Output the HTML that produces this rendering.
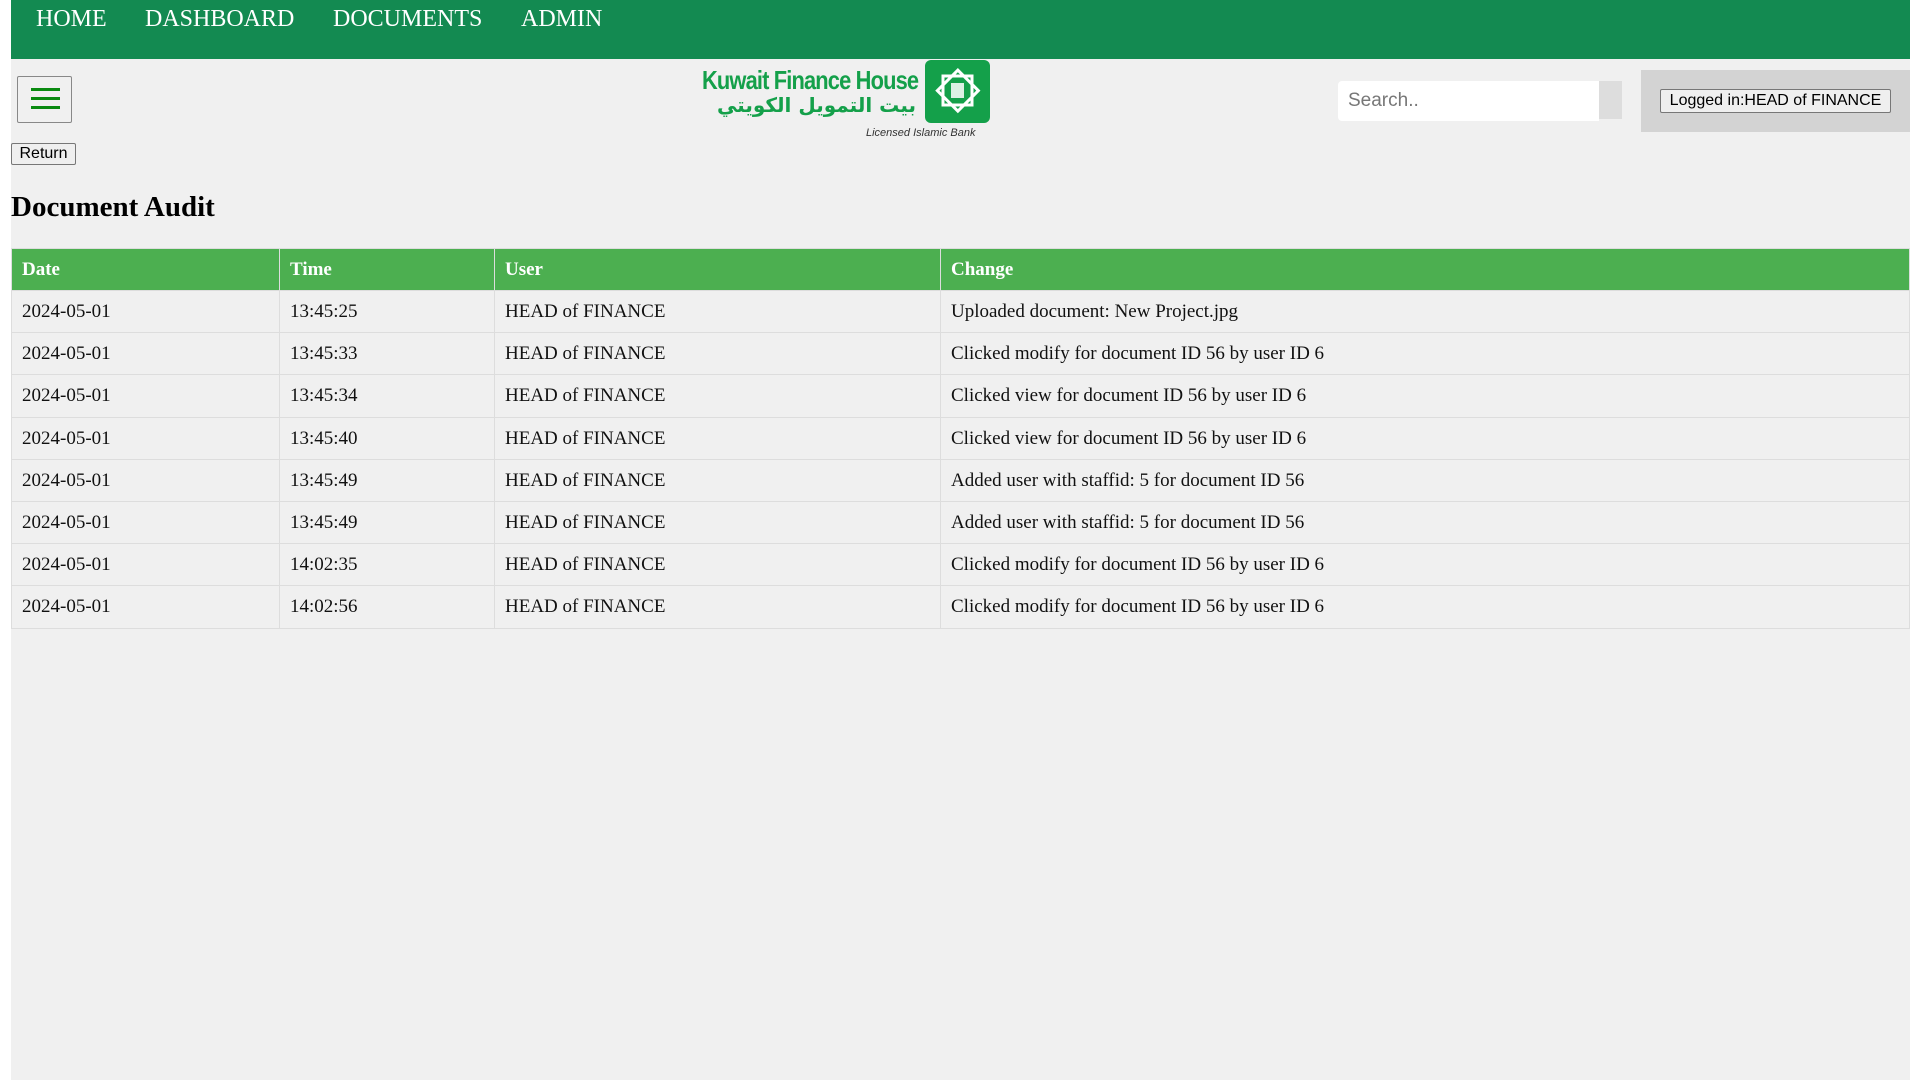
<!DOCTYPE html>
<html><head><meta charset="utf-8"><style>
html,body{margin:0;padding:0;background:#fff;width:1920px;height:1080px;overflow:hidden}
.page{position:absolute;left:11px;top:0;width:1899px;height:1080px;background:#f0f0f0;font-family:"Liberation Serif",serif}
.nav{position:absolute;left:0;top:0;width:1899px;height:59px;background:#138a51}
.nav span{position:absolute;top:6px;color:#fff;font-size:24px;}
.ham{position:absolute;left:6px;top:76px;width:55px;height:47px;border:1px solid #888;border-radius:2px;box-sizing:border-box}
.ham i{position:absolute;left:13px;width:29px;height:3px;background:#0a8a10}
.ret{position:absolute;left:0;top:143px;width:65px;height:22px;border:1px solid #777;border-radius:2px;background:#efefef;box-sizing:border-box;font:16px "Liberation Sans",sans-serif;text-align:center;line-height:20px}
h1{position:absolute;left:0;top:191px;margin:0;font-size:29px;font-weight:bold}
.search{position:absolute;left:1327px;top:81px;width:261px;height:40px;background:#fff;border-radius:4px 0 0 4px;font:19px "Liberation Sans",sans-serif;color:#777;line-height:40px;padding-left:10px;box-sizing:border-box}
.sbtn{position:absolute;left:1588px;top:81px;width:23px;height:38px;background:#ddd}
.logged{position:absolute;left:1630px;top:70px;width:269px;height:62px;background:#d3d3d3}
.logged div{position:absolute;left:19px;top:19px;width:231px;height:24px;border:1px solid #777;border-radius:2px;background:#efefef;box-sizing:border-box;font:16px "Liberation Sans",sans-serif;text-align:center;line-height:22px;white-space:nowrap}
table{position:absolute;left:0;top:248px;width:1899px;border-collapse:collapse;font-size:19px;table-layout:fixed}
th{background:#4caf50;color:#fff;text-align:left;height:40px;padding:1px 10px 0;border:1px solid #ddd;font-size:19px}
td{height:40.2px;padding:1px 10px 0;border:1px solid #ddd;color:#111;white-space:nowrap}
</style></head><body><div class="page">
<div class="nav"><span style="left:25px">HOME</span><span style="left:134px">DASHBOARD</span><span style="left:322px">DOCUMENTS</span><span style="left:510px">ADMIN</span></div>
<div class="ham"><i style="top:11px"></i><i style="top:20px"></i><i style="top:29px"></i></div>
<div style="position:absolute;left:679px;top:60px;width:300px;height:82px">
<div style="position:absolute;left:12px;top:5px;font:bold 26px 'Liberation Sans',sans-serif;color:#14a04a;letter-spacing:-1px;transform:scaleX(0.84);transform-origin:left;white-space:nowrap">Kuwait Finance House</div>
<div style="position:absolute;left:12px;top:33px;width:214px;font:bold 20px 'DejaVu Sans',sans-serif;color:#14a04a;direction:rtl;white-space:nowrap;text-align:right;overflow:hidden">بيت التمويل الكويتي</div>
<div style="position:absolute;left:235px;top:0;width:65px;height:63px;background:#14a04a;border-radius:6px">
<svg width="65" height="63" viewBox="0 0 65 63"><rect x="18" y="16" width="29" height="29" fill="none" stroke="#fff" stroke-width="3" transform="rotate(45 32.5 31)"/><rect x="18" y="16" width="29" height="29" fill="none" stroke="#fff" stroke-width="3"/><rect x="26" y="23" width="13" height="15" fill="#fff" opacity=".85"/></svg></div>
<div style="position:absolute;left:176px;top:67px;font:italic 11px 'Liberation Sans',sans-serif;color:#333;white-space:nowrap">Licensed Islamic Bank</div>
</div>
<div class="search">Search..</div><div class="sbtn"></div>
<div class="logged"><div>Logged in:HEAD of FINANCE</div></div>
<div class="ret">Return</div>
<h1>Document Audit</h1>
<table>
<tr><th style="width:247px">Date</th><th style="width:194px">Time</th><th style="width:425px">User</th><th>Change</th></tr>
<tr><td>2024-05-01</td><td>13:45:25</td><td>HEAD of FINANCE</td><td>Uploaded document: New Project.jpg</td></tr>
<tr><td>2024-05-01</td><td>13:45:33</td><td>HEAD of FINANCE</td><td>Clicked modify for document ID 56 by user ID 6</td></tr>
<tr><td>2024-05-01</td><td>13:45:34</td><td>HEAD of FINANCE</td><td>Clicked view for document ID 56 by user ID 6</td></tr>
<tr><td>2024-05-01</td><td>13:45:40</td><td>HEAD of FINANCE</td><td>Clicked view for document ID 56 by user ID 6</td></tr>
<tr><td>2024-05-01</td><td>13:45:49</td><td>HEAD of FINANCE</td><td>Added user with staffid: 5 for document ID 56</td></tr>
<tr><td>2024-05-01</td><td>13:45:49</td><td>HEAD of FINANCE</td><td>Added user with staffid: 5 for document ID 56</td></tr>
<tr><td>2024-05-01</td><td>14:02:35</td><td>HEAD of FINANCE</td><td>Clicked modify for document ID 56 by user ID 6</td></tr>
<tr><td>2024-05-01</td><td>14:02:56</td><td>HEAD of FINANCE</td><td>Clicked modify for document ID 56 by user ID 6</td></tr>
</table>
</div></body></html>
